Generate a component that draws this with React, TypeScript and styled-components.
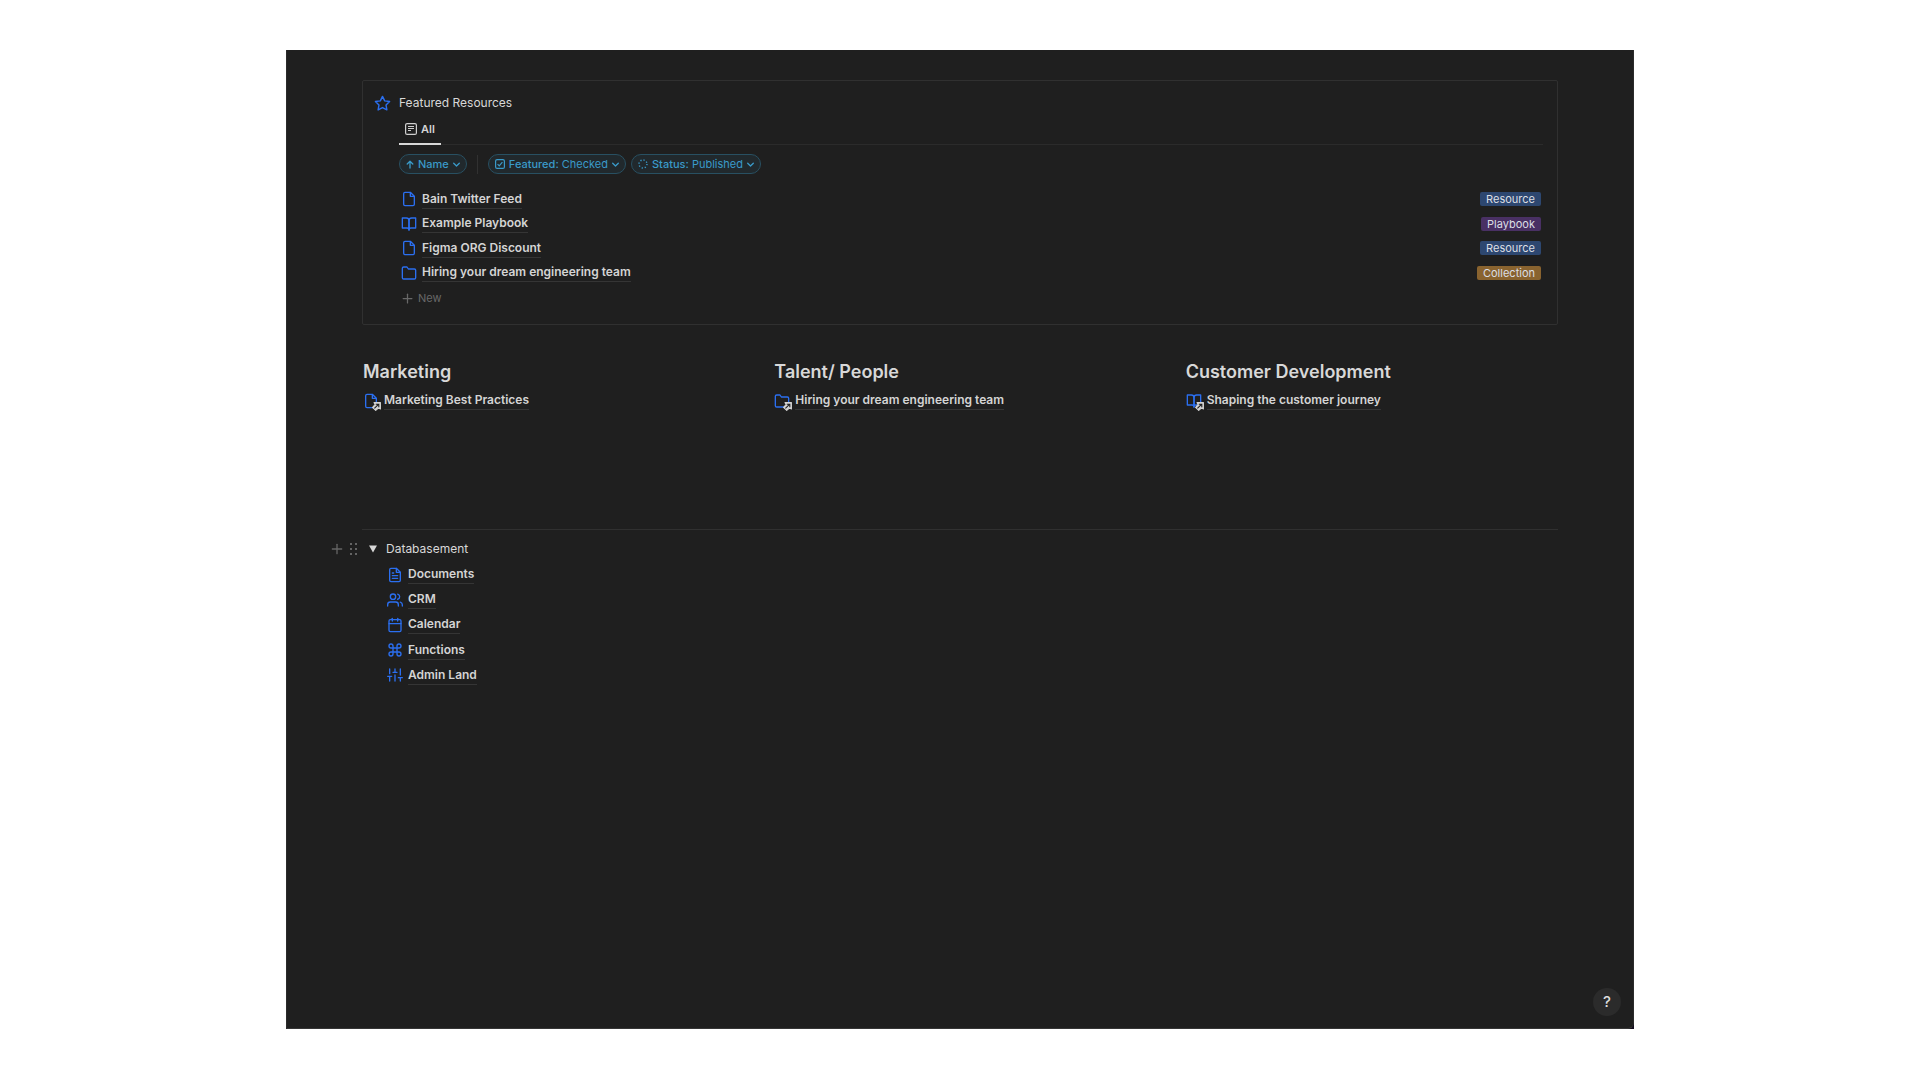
import React from 'react';
import styled, { createGlobalStyle } from 'styled-components';
import {
  FiStar, FiBookOpen, FiFolder, FiFileText, FiUsers, FiCalendar, FiCommand, FiSliders, FiPlus,
} from 'react-icons/fi';

const GlobalStyle = createGlobalStyle`
  *, *::before, *::after { box-sizing: border-box; }
  body {
    margin: 0;
    background: #fff;
    color: #d4d4d4;
    font: 400 12px/20px Inter, "Liberation Sans", sans-serif;
  }
  button { font: inherit; color: inherit; border: 0; background: none; padding: 0; cursor: pointer; }
  a { color: inherit; text-decoration: none; }
  h1, h2, ul { margin: 0; padding: 0; list-style: none; font-weight: inherit; font-size: inherit; }
  svg { display: block; flex: none; }
`;

const Page = styled.div`
  min-height: 100vh;
  padding: 50px 16px 51px;
  display: flex;
  justify-content: center;
`;

const Frame = styled.div`
  flex: 1;
  display: flex;
  max-width: 1348px;
  background: #140c1e;
`;

const Window = styled.main`
  flex: 1;
  padding: 30px 75px 12px;
  display: flex;
  flex-direction: column;
  background: #1f1f1f;
  border-left: 1px solid #2b2b2b;
  border-right: 1px solid #2b2b2b;
  border-bottom: 1px solid #363636;
  border-bottom-right-radius: 6px;
`;

const Card = styled.section`
  display: flex;
  flex-direction: column;
  padding: 12px 14px 16px 36px;
  border: 1px solid #303030;
  border-radius: 2px;
`;

const CardTitle = styled.h1`
  display: flex;
  align-items: center;
  gap: 8px;
  margin-left: -25px;
  color: #d8d8d8;
  svg { color: #2b6ff0; }
`;

const Tabs = styled.div`
  display: flex;
  margin-top: 6px;
  border-bottom: 1px solid #2b2b2b;
`;

const Tab = styled.button`
  display: flex;
  align-items: center;
  gap: 4px;
  height: 26px;
  margin-bottom: -1px;
  padding: 0 6px 4px;
  border-bottom: 2px solid #d8d8d8;
  font-size: 11px;
  font-weight: 600;
`;

const Filters = styled.div`
  display: flex;
  align-items: center;
  gap: 5px;
  margin-top: 9px;
`;

const Pill = styled.button`
  display: flex;
  align-items: center;
  gap: 4px;
  height: 20px;
  padding: 0 6px;
  border: 1px solid #285062;
  border-radius: 10px;
  background: #21292d;
  color: #3a9ac9;
  font-size: 11px;
  line-height: 18px;
`;

const Strong = styled.span`
  font-weight: 500;
`;

const Separator = styled.span`
  width: 1px;
  height: 19px;
  margin: 0 5px;
  background: #313131;
`;

const ResourceList = styled.ul`
  display: grid;
  grid-auto-rows: 1fr;
  height: 98px;
  margin-top: 13px;
`;

const ResourceRow = styled.li`
  display: flex;
  align-items: center;
  justify-content: space-between;
  padding: 0 2px;
`;

const PageLink = styled.a<{ $gap: number }>`
  display: flex;
  align-items: center;
  gap: ${(p) => p.$gap}px;
  font-weight: 600;
  color: #d4d4d4;
  svg { color: #2b6ff0; }
`;

const LinkText = styled.span`
  line-height: 18px;
  border-bottom: 1px solid #353535;
`;

const Tag = styled.span<{ $color: string }>`
  padding: 0 6px;
  border-radius: 2px;
  background: ${(p) => p.$color};
  color: #dcdfe4;
  font-size: 11px;
  line-height: 14px;
`;

const NewButton = styled.button`
  display: flex;
  align-items: center;
  align-self: flex-start;
  gap: 3px;
  margin: 3px 0 0 1px;
  color: #686868;
  font-size: 11px;
  line-height: 20px;
`;

const Columns = styled.div`
  display: grid;
  grid-template-columns: repeat(3, 1fr);
  column-gap: 39px;
  min-height: 169px;
  margin-top: 35px;
  padding-left: 1px;
`;

const ColumnTitle = styled.h2`
  margin-bottom: 7px;
  color: #d8d8d8;
  font-size: 18px;
  font-weight: 600;
  line-height: 24px;
`;

const LinkedIcon = styled.span`
  position: relative;
`;

const LinkedMark = styled.svg`
  position: absolute;
  right: -2px;
  bottom: -2px;
`;

const Basement = styled.section`
  border-top: 1px solid #303030;
  padding-top: 9px;
`;

const ToggleLine = styled.div`
  display: flex;
  align-items: center;
  margin-left: -33px;
  color: #646464;
`;

const HandleButton = styled.button`
  margin-right: 5px;
`;

const Toggle = styled.button`
  display: flex;
  align-items: center;
  gap: 9px;
  margin-left: 6px;
  color: #d8d8d8;
`;

const DatabaseList = styled.ul`
  display: grid;
  grid-auto-rows: 1fr;
  height: 126px;
  margin: 3px 0 0 25px;
`;

const DatabaseRow = styled.li`
  display: flex;
  align-items: center;
`;

const Help = styled.button`
  width: 28px;
  height: 28px;
  margin: auto -63px 0 auto;
  border-radius: 50%;
  background: #2b2b2b;
  color: #dedede;
  font-size: 15px;
  font-weight: 500;
`;

const FileIcon = () => (
  <svg width="16" height="16" viewBox="0 0 24 24" fill="none" stroke="currentColor" strokeWidth="2" strokeLinecap="round" strokeLinejoin="round" aria-hidden="true">
    <path d="M14 2H6a2 2 0 0 0-2 2v16a2 2 0 0 0 2 2h12a2 2 0 0 0 2-2V8l-6-6z" />
    <path d="M14 3v5h5" />
  </svg>
);

const ListIcon = () => (
  <svg width="12" height="12" viewBox="0 0 12 12" fill="none" stroke="#cfcfcf" aria-hidden="true">
    <rect x="0.6" y="0.6" width="10.800" height="10.800" rx="1.500" strokeWidth="1.200" />
    <path d="M3 3.500h6M3 5.500h6M3 7.500h3" />
  </svg>
);

const ArrowUpIcon = () => (
  <svg width="8" height="9" viewBox="0 0 8 9" fill="none" stroke="currentColor" strokeWidth="1.300" strokeLinecap="round" strokeLinejoin="round" aria-hidden="true">
    <path d="M4 8V1.200M1.200 4L4 1.200 6.800 4" />
  </svg>
);

const ChevronIcon = () => (
  <svg width="7" height="5" viewBox="0 0 7 5" fill="none" stroke="currentColor" strokeWidth="1.300" strokeLinecap="round" strokeLinejoin="round" aria-hidden="true">
    <path d="M0.700 1.200l2.800 2.800 2.800-2.800" />
  </svg>
);

const CheckIcon = () => (
  <svg width="10" height="10" viewBox="0 0 10 10" fill="none" stroke="currentColor" strokeWidth="1.200" aria-hidden="true">
    <rect x="0.600" y="0.600" width="8.800" height="8.800" rx="1.500" />
    <path d="M2.600 5.200l1.600 1.600L7.400 3.200" />
  </svg>
);

const StatusIcon = () => (
  <svg width="10" height="10" viewBox="0 0 10 10" fill="none" stroke="currentColor" aria-hidden="true">
    <circle cx="5" cy="5" r="4" strokeWidth="1.400" strokeDasharray="1.200 1.940" />
  </svg>
);

const LinkMark = () => (
  <LinkedMark width="9" height="9" viewBox="0 0 9 9" fill="none" aria-hidden="true">
    <path d="M2 0.600h6.400V7L6.700 5.800 3.700 8.400 0.600 5.300 3.300 2.400z" fill="#d4d4d4" stroke="#d4d4d4" strokeWidth="1.100" strokeLinejoin="round" />
    <path d="M2.400 6.400l3.800-3.800M3.800 2.200h3v3" stroke="#1f1f1f" strokeWidth="1.100" />
  </LinkedMark>
);

const resources = [
  { name: 'Bain Twitter Feed', icon: <FileIcon />, tag: 'Resource', color: '#2d4770' },
  { name: 'Example Playbook', icon: <FiBookOpen size={16} />, tag: 'Playbook', color: '#493064' },
  { name: 'Figma ORG Discount', icon: <FileIcon />, tag: 'Resource', color: '#2d4770' },
  { name: 'Hiring your dream engineering team', icon: <FiFolder size={16} />, tag: 'Collection', color: '#89632f' },
];

const topics = [
  { title: 'Marketing', name: 'Marketing Best Practices', icon: <FileIcon /> },
  { title: 'Talent/ People', name: 'Hiring your dream engineering team', icon: <FiFolder size={16} /> },
  { title: 'Customer Development', name: 'Shaping the customer journey', icon: <FiBookOpen size={16} /> },
];

const databases = [
  { name: 'Documents', icon: <FiFileText size={16} /> },
  { name: 'CRM', icon: <FiUsers size={16} /> },
  { name: 'Calendar', icon: <FiCalendar size={16} /> },
  { name: 'Functions', icon: <FiCommand size={16} /> },
  { name: 'Admin Land', icon: <FiSliders size={16} /> },
];

export default function App() {
  return (
    <Page>
      <GlobalStyle />
      <Frame>
        <Window>
          <Card>
            <CardTitle><FiStar size={17} />Featured Resources</CardTitle>
            <Tabs>
              <Tab><ListIcon />All</Tab>
            </Tabs>
            <Filters>
              <Pill><ArrowUpIcon /><Strong>Name</Strong><ChevronIcon /></Pill>
              <Separator />
              <Pill><CheckIcon /><span><Strong>Featured:</Strong> Checked</span><ChevronIcon /></Pill>
              <Pill><StatusIcon /><span><Strong>Status:</Strong> Published</span><ChevronIcon /></Pill>
            </Filters>
            <ResourceList>
              {resources.map((r) => (
                <ResourceRow key={r.name}>
                  <PageLink href="#" $gap={5}>{r.icon}<LinkText>{r.name}</LinkText></PageLink>
                  <Tag $color={r.color}>{r.tag}</Tag>
                </ResourceRow>
              ))}
            </ResourceList>
            <NewButton><FiPlus size={15} />New</NewButton>
          </Card>
          <Columns>
            {topics.map((t) => (
              <section key={t.title}>
                <ColumnTitle>{t.title}</ColumnTitle>
                <PageLink href="#" $gap={5}>
                  <LinkedIcon>{t.icon}<LinkMark /></LinkedIcon>
                  <LinkText>{t.name}</LinkText>
                </PageLink>
              </section>
            ))}
          </Columns>
          <Basement>
            <ToggleLine>
              <HandleButton aria-label="Add block"><FiPlus size={16} /></HandleButton>
              <HandleButton aria-label="Drag block">
                <svg width="8" height="12" viewBox="0 0 8 12" fill="currentColor" aria-hidden="true">
                  <path d="M0 0h2v2H0zM5 0h2v2H5zM0 5h2v2H0zM5 5h2v2H5zM0 10h2v2H0zM5 10h2v2H5z" />
                </svg>
              </HandleButton>
              <Toggle aria-expanded="true">
                <svg width="8" height="8" viewBox="0 0 8 8" fill="currentColor" aria-hidden="true"><path d="M0 0.500h8L4 7.500z" /></svg>
                Databasement
              </Toggle>
            </ToggleLine>
            <DatabaseList>
              {databases.map((d) => (
                <DatabaseRow key={d.name}>
                  <PageLink href="#" $gap={5}>{d.icon}<LinkText>{d.name}</LinkText></PageLink>
                </DatabaseRow>
              ))}
            </DatabaseList>
          </Basement>
          <Help aria-label="Help">?</Help>
        </Window>
      </Frame>
    </Page>
  );
}
